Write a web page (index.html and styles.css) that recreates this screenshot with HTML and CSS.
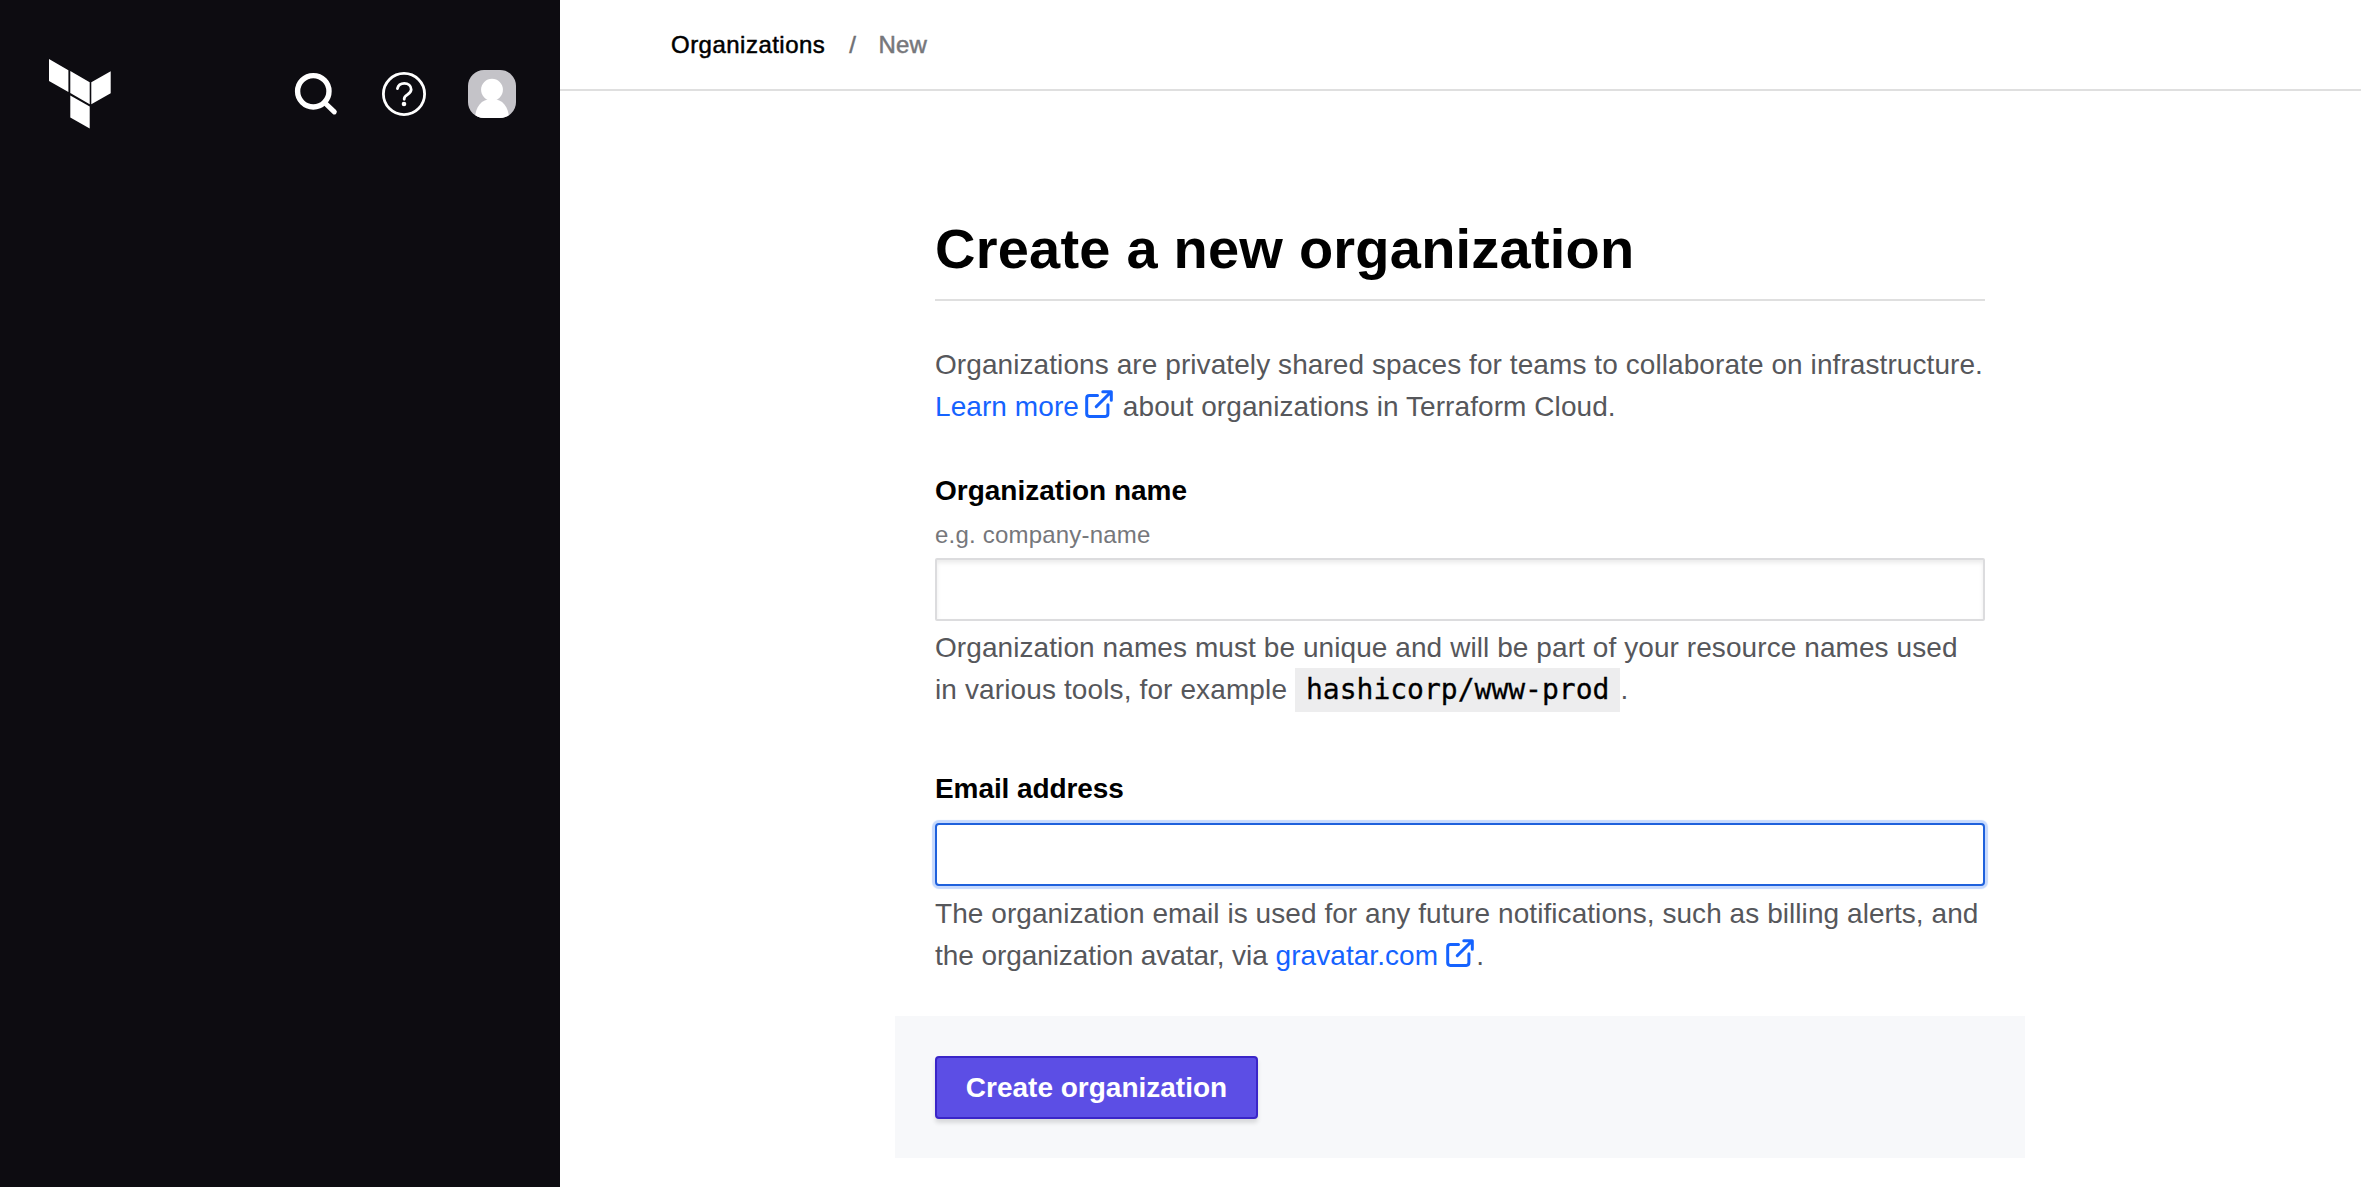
FILE: index.html
```html
<!DOCTYPE html>
<html lang="en">
<head>
<meta charset="utf-8">
<title>New Organization | Terraform Cloud</title>
<link rel="stylesheet" href="styles.css">
</head>
<body>
<svg class="sprite" aria-hidden="true">
  <symbol id="external" viewBox="0 0 28 28">
    <path d="M12.5 5.6H4.3a2.6 2.6 0 0 0-2.6 2.6v15.6a2.6 2.6 0 0 0 2.6 2.6h16a2.6 2.6 0 0 0 2.6-2.6v-9M11.3 16.6 26.2 1.8M17.8 1.7h8.5v8.6" fill="none" stroke="currentColor" stroke-width="3" stroke-linecap="round" stroke-linejoin="round"/>
  </symbol>
</svg>
<div class="app">
  <aside class="sidebar">
    <svg class="logo" viewBox="0 0 62 70">
      <path d="M0 0l19.4 11.3V33L0 22zM21.3 12l19.4 11.3v22L21.3 34zM42.3 23.3 61.7 12.3v22l-19.4 11zM21.3 36.4l19.4 11.1v21.9L21.3 58.4z" fill="#fff"/>
    </svg>
    <nav class="actions">
      <svg class="search" viewBox="0 0 44 44" fill="none" stroke="#fff">
        <circle cx="19.3" cy="19.3" r="15.7" stroke-width="5.4"/>
        <path d="M30.5 30.5l9.8 9.400" stroke-width="5" stroke-linecap="round"/>
      </svg>
      <svg class="help" viewBox="0 0 44 44" fill="none" stroke="#fff">
        <circle cx="22" cy="22" r="20.6" stroke-width="2.8"/>
        <path d="M15.4 16.6c.8-3.2 3.4-5.2 6.9-5.2 3.8 0 6.9 2.4 6.9 6.2 0 4.8-7 5.1-7 9.1v.6" stroke-width="2.8" stroke-linecap="round"/>
        <circle cx="22" cy="32" r="2.3" fill="#fff" stroke="none"/>
      </svg>
      <svg class="avatar" viewBox="0 0 48 48">
        <rect width="48" height="48" fill="#c4c3c8"/>
        <circle cx="24" cy="19.7" r="10.9" fill="#fff"/>
        <path d="M7 48c.5-11 6-19 17-19s16.500 8 17 19z" fill="#fff"/>
      </svg>
    </nav>
  </aside>
  <main class="main">
    <header class="crumbs">
      <a class="crumb-org">Organizations</a><span class="crumb-sep">/</span><span class="crumb-new">New</span>
    </header>
    <form class="form">
      <h1 class="title">Create a new organization</h1>
      <p class="text intro">Organizations are privately shared spaces for teams to collaborate on infrastructure.<br><a class="link">Learn more<svg class="ext"><use href="#external"/></svg></a> about organizations in Terraform Cloud.</p>
      <label class="label" for="org">Organization name</label>
      <div class="hint">e.g. company-name</div>
      <input class="input" id="org" type="text">
      <p class="text note">Organization names must be unique and will be part of your resource names used<br><span class="loose">in various tools, for example</span> <code class="code">hashicorp/www-prod</code>.</p>
      <label class="label label-email" for="email">Email address</label>
      <input class="input focused" id="email" type="text">
      <p class="text note note-email">The organization email is used for any future notifications, such as billing alerts, and<br><span class="tight">the organization avatar, via</span> <a class="link">gravatar.com<svg class="ext"><use href="#external"/></svg></a>.</p>
      <div class="footer"><button class="button" type="button">Create organization</button></div>
    </form>
  </main>
</div>
</body>
</html>
```
FILE: styles.css
```css
* { box-sizing: border-box; }

body {
  margin: 0;
  background: #fff;
  color: #000;
  font-family: "Liberation Sans", Arial, sans-serif;
}

.sprite { display: none; }

.app {
  display: flex;
  height: 1187px;
  overflow: hidden;
}

.sidebar {
  display: flex;
  flex: none;
  align-items: flex-start;
  justify-content: space-between;
  width: 560px;
  padding: 59px 44px 0 49px;
  background: #0d0c11;
}

.logo { width: 62px; height: 70px; }

.actions {
  display: flex;
  align-items: center;
  gap: 42px;
  margin-top: 11px;
}

.search, .help { width: 44px; height: 44px; }
.search { margin-right: 2px; }
.avatar { width: 48px; height: 48px; border-radius: 16px; }

.main {
  flex: 1;
  padding-right: 19px;
}

.crumbs {
  display: flex;
  height: 91px;
  padding: 31px 0 0 111px;
  border-bottom: 2px solid #dfdfdf;
  font-size: 24px;
  letter-spacing: 0.48px;
  line-height: 28px;
  -webkit-text-stroke: 0.5px;
}

.crumb-sep { margin: 0 22px 0 24px; color: #6f7074; }
.crumb-new { color: #76777b; letter-spacing: 0.2px; }

.form {
  width: 1050px;
  margin-left: 375px;
}

.title {
  height: 210px;
  margin: 0;
  padding-top: 126px;
  border-bottom: 2px solid #dfdfdf;
  font-size: 56px;
  letter-spacing: 0.22px;
  line-height: 64px;
  white-space: nowrap;
}

.text {
  margin: 0;
  color: #56575b;
  font-size: 28px;
  letter-spacing: 0.08px;
  line-height: 42px;
  white-space: nowrap;
}

.intro { padding-top: 43px; }
.note { padding-top: 6px; }
.note-email { padding-top: 7px; letter-spacing: 0.06px; }
.loose { letter-spacing: 0.12px; }
.tight { letter-spacing: -0.07px; }

.link { color: #1563ff; }

.ext {
  width: 28px;
  height: 28px;
  margin: 0 2px 0 6px;
  vertical-align: -2px;
}

.note-email .ext { margin-left: 8px; }

.label {
  display: block;
  padding-top: 42px;
  font-size: 28px;
  font-weight: bold;
  line-height: 42px;
}

.label-email { padding: 57px 0 13px; letter-spacing: -0.08px; }

.hint {
  padding: 5px 0;
  color: #76777b;
  font-size: 24px;
  letter-spacing: 0.2px;
  line-height: 36px;
}

.input {
  display: block;
  width: 1050px;
  height: 63px;
  margin: 0;
  border: 2px solid #dcdcde;
  border-radius: 2px;
  background: #fff;
  box-shadow: inset 0 3px 4px rgba(0, 0, 0, 0.08);
  outline: none;
}

.focused {
  border-color: #1f61dc;
  border-radius: 4px;
  box-shadow: 0 0 1px 3px #c6d9fd;
}

.code {
  padding: 5px 11px 6px;
  background: #ededee;
  color: #000;
  font-family: "DejaVu Sans Mono", monospace;
  font-size: 28px;
  letter-spacing: 0;
  line-height: 1;
  -webkit-text-stroke: 0.3px;
}

.footer {
  width: 1130px;
  height: 142px;
  margin: 39px -40px 0;
  padding: 40px;
  background: #f7f8fa;
}

.button {
  width: 323px;
  height: 63px;
  padding: 0;
  border: 2px solid #3a25c8;
  border-radius: 4px;
  background: #5c4ee5;
  box-shadow: 0 4px 4px rgba(0, 0, 0, 0.12);
  color: #fff;
  font: bold 28px "Liberation Sans", Arial, sans-serif;
}
```
